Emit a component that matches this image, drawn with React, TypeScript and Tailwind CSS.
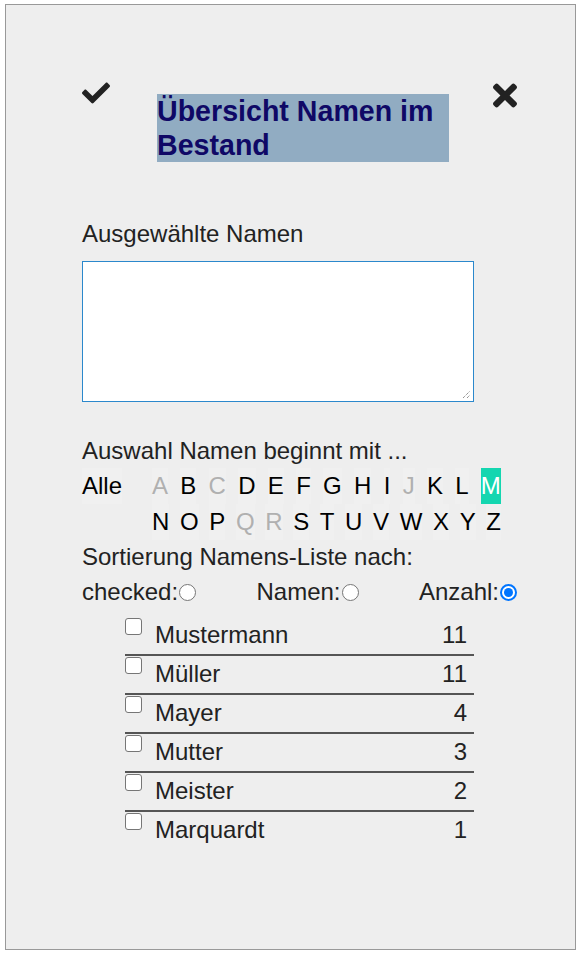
import { FaCheck, FaTimes } from "react-icons/fa";

const ROW_ONE = ["A", "B", "C", "D", "E", "F", "G", "H", "I", "J", "K", "L", "M"];
const ROW_TWO = ["N", "O", "P", "Q", "R", "S", "T", "U", "V", "W", "X", "Y", "Z"];
const DISABLED = ["A", "C", "J", "Q", "R"];
const ACTIVE = "M";

const NAMES = [
  { name: "Mustermann", count: 11 },
  { name: "Müller", count: 11 },
  { name: "Mayer", count: 4 },
  { name: "Mutter", count: 3 },
  { name: "Meister", count: 2 },
  { name: "Marquardt", count: 1 },
];

function Letter({ letter }: { letter: string }) {
  const active = letter === ACTIVE;
  const disabled = DISABLED.includes(letter);
  return (
    <span
      className={
        active
          ? "h-[36px] leading-[36px] bg-[#14d6b0] text-white"
          : disabled
          ? "h-[36px] leading-[36px] bg-[#f0f0f0] text-[#b0b0b0]"
          : "h-[36px] leading-[36px] bg-[#f0f0f0] text-black"
      }
    >
      {letter}
    </span>
  );
}

function Radio({ checked }: { checked?: boolean }) {
  return checked ? (
    <span className="ml-[1px] flex h-[17px] w-[17px] items-center justify-center rounded-full border-2 border-[#0075ff] bg-white">
      <span className="h-[9px] w-[9px] rounded-full bg-[#0075ff]" />
    </span>
  ) : (
    <span className="ml-[1px] h-[17px] w-[17px] rounded-full border border-[#767676] bg-white" />
  );
}

function NameRow({ name, count, last }: { name: string; count: number; last: boolean }) {
  return (
    <div
      className={
        last
          ? "flex h-[39px] items-start"
          : "flex h-[39px] items-start border-b-[2px] border-[#555]"
      }
    >
      <span className="mt-[1px] h-[17px] w-[17px] shrink-0 rounded-[3px] border border-[#767676] bg-white" />
      <span className="ml-[13px] mt-[4px] flex-1 leading-[28px]">{name}</span>
      <span className="mt-[4px] pr-[7px] leading-[28px]">{count}</span>
    </div>
  );
}

export default function App() {
  return (
    <div className="min-h-[957px] w-[581px] bg-white pt-[4px] pl-[5px] font-['Liberation_Sans',Arial,sans-serif]">
      <div className="h-[946px] w-[571px] border border-[#999] bg-[#eeeeee] pl-[76px] pt-[74px] text-[24px] text-[#222]">
        {/* Header */}
        <div className="flex w-[435px] items-start">
          <FaCheck className="h-[28px] w-[28px] text-[#222]" />
          <h2 className="ml-[47px] mt-[15px] w-[292px] bg-[#91acc2] text-[28.6px] font-bold leading-[34px] text-[#0f0866]">
            Übersicht Namen im Bestand
          </h2>
          <FaTimes className="ml-auto mt-[-1px] h-[35px] w-[24px] text-[#222]" />
        </div>

        {/* Selected names */}
        <div className="mt-[58px] leading-[28px]">Ausgewählte Namen</div>
        <div className="relative mt-[13px] h-[141px] w-[392px] border border-[#2b88cc] bg-white">
          <svg className="absolute bottom-[2px] right-[2px]" width="9" height="9" viewBox="0 0 9 9">
            <path d="M1 8 L8 1 M5 8 L8 5" stroke="#666" strokeWidth="1" strokeDasharray="1 1" />
          </svg>
        </div>

        {/* Alphabet */}
        <div className="mt-[35px] leading-[28px]">Auswahl Namen beginnt mit ...</div>
        <div className="mt-[3px] flex text-black">
          <div className="w-[70px]">
            <span className="inline-block h-[36px] bg-[#f0f0f0] leading-[36px]">Alle</span>
          </div>
          <div className="w-[349px]">
            <div className="flex justify-between">
              {ROW_ONE.map((l) => (
                <Letter key={l} letter={l} />
              ))}
            </div>
            <div className="flex justify-between">
              {ROW_TWO.map((l) => (
                <Letter key={l} letter={l} />
              ))}
            </div>
          </div>
        </div>

        {/* Sorting */}
        <div className="mt-[3px] leading-[28px]">Sortierung Namens-Liste nach:</div>
        <div className="mt-[7px] flex w-[435px] justify-between leading-[28px]">
          <label className="flex items-center">
            checked:
            <Radio />
          </label>
          <label className="flex items-center">
            Namen:
            <Radio />
          </label>
          <label className="flex items-center">
            Anzahl:
            <Radio checked />
          </label>
        </div>

        {/* Names list */}
        <div className="ml-[43px] mt-[11px] w-[349px]">
          {NAMES.map((n, i) => (
            <NameRow key={n.name} name={n.name} count={n.count} last={i === NAMES.length - 1} />
          ))}
        </div>
      </div>
    </div>
  );
}
